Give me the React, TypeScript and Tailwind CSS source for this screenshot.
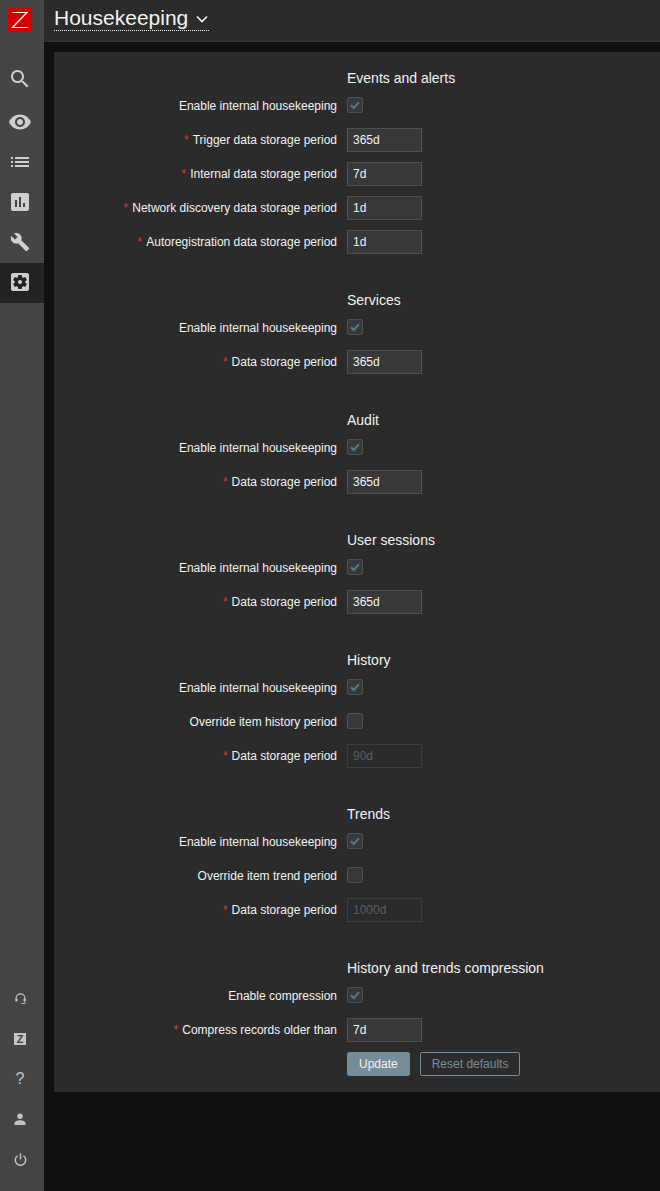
import type { ReactNode } from "react";

const ICONS = {
  search:
    "M15.5 14h-.79l-.28-.27C15.41 12.59 16 11.11 16 9.5 16 5.91 13.09 3 9.5 3S3 5.91 3 9.5 5.91 16 9.5 16c1.61 0 3.09-.59 4.23-1.57l.27.28v.79l5 4.99L20.49 19l-4.99-5zm-6 0C7.01 14 5 11.99 5 9.5S7.01 5 9.5 5 14 7.01 14 9.5 11.99 14 9.5 14z",
  eye: "M12 4.5C7 4.5 2.73 7.61 1 12c1.73 4.39 6 7.5 11 7.5s9.27-3.11 11-7.5c-1.73-4.39-6-7.5-11-7.5zM12 17c-2.76 0-5-2.24-5-5s2.24-5 5-5 5 2.24 5 5-2.24 5-5 5zm0-8c-1.66 0-3 1.34-3 3s1.34 3 3 3 3-1.34 3-3-1.34-3-3-3z",
  list: "M3 13h2v-2H3v2zm0 4h2v-2H3v2zm0-8h2V7H3v2zm4 4h14v-2H7v2zm0 4h14v-2H7v2zM7 7v2h14V7H7z",
  chart:
    "M19 3H5c-1.1 0-2 .9-2 2v14c0 1.1.9 2 2 2h14c1.1 0 2-.9 2-2V5c0-1.1-.9-2-2-2zM9 17H7v-7h2v7zm4 0h-2V7h2v10zm4 0h-2v-4h2v4z",
  wrench:
    "M22.7 19l-9.1-9.1c.9-2.3.4-5-1.5-6.9-2-2-5-2.4-7.4-1.3L9 6 6 9 1.6 4.7C.4 7.1.9 10.1 2.9 12.1c1.9 1.9 4.6 2.4 6.9 1.5l9.1 9.1c.4.4 1 .4 1.4 0l2.3-2.3c.5-.4.5-1.1.1-1.4z",
  gear: "M12 10c-1.1 0-2 .9-2 2s.9 2 2 2 2-.9 2-2-.9-2-2-2zm7-7H5c-1.11 0-2 .9-2 2v14c0 1.1.89 2 2 2h14c1.11 0 2-.9 2-2V5c0-1.1-.89-2-2-2zm-1.75 9c0 .23-.02.46-.05.68l1.48 1.16c.13.11.17.3.08.45l-1.4 2.42c-.09.15-.27.21-.43.15l-1.74-.7c-.36.28-.76.51-1.18.69l-.26 1.85c-.03.17-.18.3-.35.3h-2.8c-.17 0-.32-.13-.35-.29l-.26-1.85c-.43-.18-.82-.41-1.18-.69l-1.74.7c-.16.06-.34 0-.43-.15l-1.4-2.42c-.09-.15-.05-.34.08-.45l1.48-1.16c-.03-.23-.05-.46-.05-.69 0-.23.02-.46.05-.68l-1.48-1.16c-.13-.11-.17-.3-.08-.45l1.4-2.42c.09-.15.27-.21.43-.15l1.74.7c.36-.28.76-.51 1.18-.69l.26-1.85c.03-.17.18-.3.35-.3h2.8c.17 0 .32.13.35.29l.26 1.85c.43.18.82.41 1.18.69l1.74-.7c.16-.06.34 0 .43.15l1.4 2.42c.09.15.05.34-.08.45l-1.48 1.16c.03.23.05.46.05.69z",
};

function NavIcon({ d, size = 24 }: { d: string; size?: number }) {
  return (
    <svg width={size} height={size} viewBox="0 0 24 24" fill="currentColor" className="mr-[4px]">
      <path d={d} fillRule="evenodd" />
    </svg>
  );
}

function Sidebar() {
  return (
    <aside className="w-[44px] shrink-0 bg-[#454545] flex flex-col justify-between text-[#cfcfcf] pb-[12px]">
      <div>
        <div className="pl-[8px] pt-[8px] h-[63px]">
          <svg width="24" height="24" viewBox="0 0 24 24">
            <rect width="24" height="24" fill="#d40000" />
            <path d="M4.5 4.5h14.5L4.5 19.5h15" fill="none" stroke="#fff" strokeWidth="1.2" />
          </svg>
        </div>
        <div className="h-[40px] flex items-center justify-center pb-[8px]">
          <NavIcon d={ICONS.search} />
        </div>
        <div className="h-[40px] flex items-center justify-center pb-[2px]">
          <NavIcon d={ICONS.eye} />
        </div>
        <div className="h-[40px] flex items-center justify-center pb-[2px]">
          <NavIcon d={ICONS.list} />
        </div>
        <div className="h-[40px] flex items-center justify-center pb-[2px]">
          <NavIcon d={ICONS.chart} />
        </div>
        <div className="h-[40px] flex items-center justify-center pb-[2px]">
          <NavIcon d={ICONS.wrench} size={20} />
        </div>
        <div className="h-[40px] flex items-center justify-center pb-[2px] bg-[#232323]">
          <NavIcon d={ICONS.gear} />
        </div>
      </div>
      <div className="text-[#c4c4c4] pr-[4px]">
        <div className="h-[40px] flex items-center justify-center">
          <svg width="11" height="12" viewBox="0 0 12 13" fill="none" stroke="currentColor" strokeWidth="1.4">
            <path d="M1.2 8V5.8a4.8 4.8 0 0 1 9.6 0V8" />
            <path d="M1.6 6.5v2.8M10.4 6.5v2.8" strokeWidth="2.2" />
            <path d="M10.8 9.5v1.9H7" strokeWidth="1" />
          </svg>
        </div>
        <div className="h-[40px] flex items-center justify-center">
          <span className="w-[12px] h-[12px] bg-[#c4c4c4] text-[#454545] text-[11px] font-bold leading-[12px] text-center">
            Z
          </span>
        </div>
        <div className="h-[40px] flex items-center justify-center text-[16px]">?</div>
        <div className="h-[40px] flex items-center justify-center">
          <svg width="12" height="12" viewBox="0 0 14 14" fill="currentColor">
            <circle cx="7" cy="3.7" r="3.2" />
            <path d="M0.5 14v-1.8C0.5 10 4 8.6 7 8.6s6.5 1.4 6.5 3.6V14z" />
          </svg>
        </div>
        <div className="h-[40px] flex items-center justify-center">
          <svg width="13" height="13" viewBox="0 0 14 14" fill="none" stroke="currentColor" strokeWidth="1.5">
            <path d="M7 0.5v6.5" />
            <path d="M3.8 3A5.6 5.6 0 1 0 10.2 3" />
          </svg>
        </div>
      </div>
    </aside>
  );
}

function Row({ label, required, children, check }: { label: string; required?: boolean; children: ReactNode; check?: boolean }) {
  return (
    <div className="h-[34px] flex items-center">
      <div className={`w-[283px] text-right ${check ? "pb-[1px]" : ""}`}>
        {required && <span className="text-[#e33734] mr-[4px]">*</span>}
        {label}
      </div>
      <div className="ml-[10px] flex items-center">{children}</div>
    </div>
  );
}

function Check({ on }: { on?: boolean }) {
  return (
    <span className="w-[16px] h-[16px] mb-[2px] bg-[#383838] border border-[#4f4f4f] rounded-[2px] flex items-center justify-center">
      {on && (
        <svg width="12" height="12" viewBox="0 0 12 12" fill="none" stroke="#5d7484" strokeWidth="2">
          <path d="M2 6.2l2.8 2.8L10 3.2" />
        </svg>
      )}
    </span>
  );
}

function Field({ value, disabled }: { value: string; disabled?: boolean }) {
  return (
    <span
      className={
        disabled
          ? "w-[75px] h-[24px] border border-[#3d3d3d] px-[5px] leading-[22px] text-[#5c5c5c]"
          : "w-[75px] h-[24px] bg-[#383838] border border-[#4f4f4f] px-[5px] leading-[22px] text-[#f2f2f2]"
      }
    >
      {value}
    </span>
  );
}

function Section({ title, children }: { title: string; children: ReactNode }) {
  return (
    <section className="mb-[30px] last:mb-0">
      <div className="h-[22px] flex items-center pl-[293px] text-[14px]">{title}</div>
      {children}
    </section>
  );
}

const ENABLE = "Enable internal housekeeping";

export default function App() {
  return (
    <div className="flex min-h-[1191px] bg-[#0e1012] font-['Liberation_Sans',Arial,sans-serif] text-[12px] text-[#f2f2f2]">
      <Sidebar />
      <div className="flex-1 min-w-0">
        <header className="h-[42px] bg-[#2b2b2b] border-b border-[#333333] pl-[10px] flex items-start">
          <h1 className="h-[31px] pt-[5px] border-b border-dotted border-[#f2f2f2] flex items-center gap-[8px] text-[21px] leading-[25px] w-[155px]">
            Housekeeping
            <svg width="12" height="8" viewBox="0 0 12 8" fill="none" stroke="#f2f2f2" strokeWidth="1.6" className="mt-[2px]">
              <path d="M1 1.5l5 5 5-5" />
            </svg>
          </h1>
        </header>
        <main className="ml-[10px] mt-[10px] bg-[#2b2b2b] pt-[15px] pb-[11px]">
          <Section title="Events and alerts">
            <Row label={ENABLE} check><Check on /></Row>
            <Row label="Trigger data storage period" required><Field value="365d" /></Row>
            <Row label="Internal data storage period" required><Field value="7d" /></Row>
            <Row label="Network discovery data storage period" required><Field value="1d" /></Row>
            <Row label="Autoregistration data storage period" required><Field value="1d" /></Row>
          </Section>
          <Section title="Services">
            <Row label={ENABLE} check><Check on /></Row>
            <Row label="Data storage period" required><Field value="365d" /></Row>
          </Section>
          <Section title="Audit">
            <Row label={ENABLE} check><Check on /></Row>
            <Row label="Data storage period" required><Field value="365d" /></Row>
          </Section>
          <Section title="User sessions">
            <Row label={ENABLE} check><Check on /></Row>
            <Row label="Data storage period" required><Field value="365d" /></Row>
          </Section>
          <Section title="History">
            <Row label={ENABLE} check><Check on /></Row>
            <Row label="Override item history period" check><Check /></Row>
            <Row label="Data storage period" required><Field value="90d" disabled /></Row>
          </Section>
          <Section title="Trends">
            <Row label={ENABLE} check><Check on /></Row>
            <Row label="Override item trend period" check><Check /></Row>
            <Row label="Data storage period" required><Field value="1000d" disabled /></Row>
          </Section>
          <Section title="History and trends compression">
            <Row label="Enable compression" check><Check on /></Row>
            <Row label="Compress records older than" required><Field value="7d" /></Row>
            <div className="pl-[293px] py-[5px] flex gap-[10px]">
              <button className="h-[24px] px-[11px] bg-[#768d99] border border-[#768d99] rounded-[2px] text-[#f2f2f2]">Update</button>
              <button className="h-[24px] px-[11px] border border-[#768d99] rounded-[2px] text-[#768d99]">Reset defaults</button>
            </div>
          </Section>
        </main>
      </div>
    </div>
  );
}
